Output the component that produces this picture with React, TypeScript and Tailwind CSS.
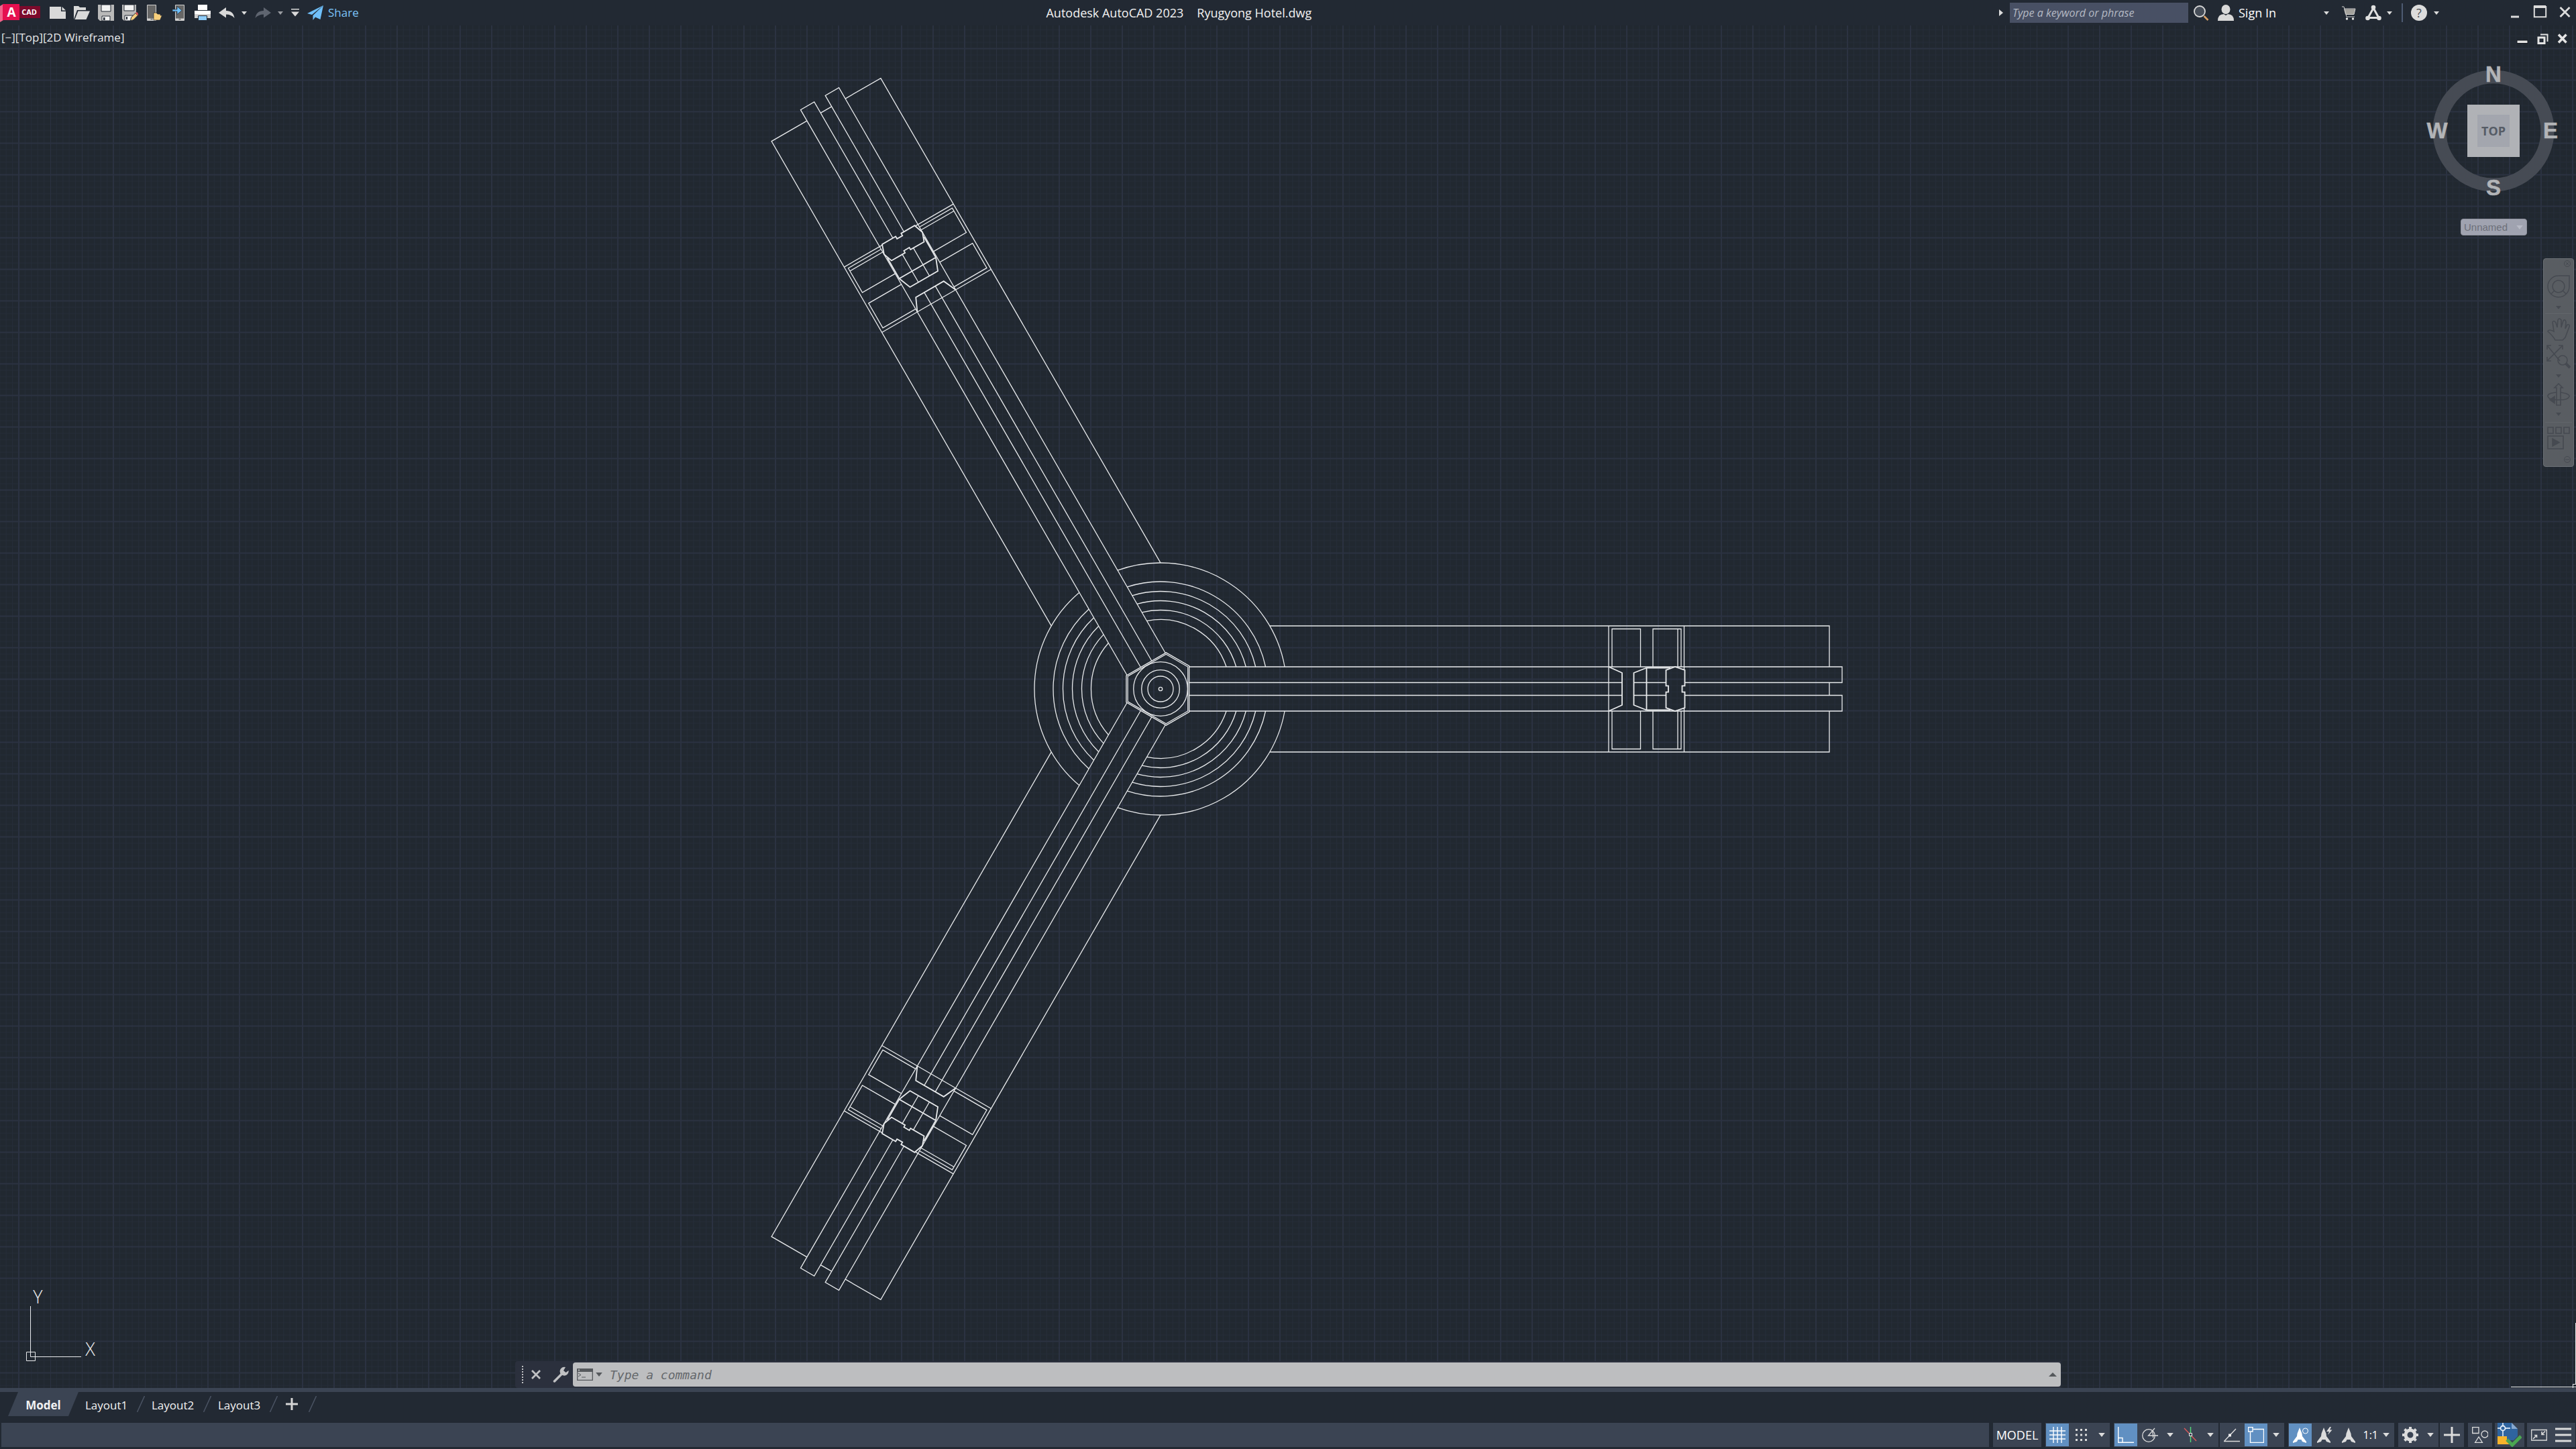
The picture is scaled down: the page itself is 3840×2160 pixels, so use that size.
import { useState, type ReactNode } from "react";

const point = (r: number, deg: number) => {
  const a = (deg * Math.PI) / 180;
  return `${(r * Math.cos(a)).toFixed(2)} ${(r * Math.sin(a)).toFixed(2)}`;
};

const hexagon = (r: number, half: number) =>
  [half, 120 - half, 120 + half, 240 - half, 240 + half, 360 - half].map((d) => point(r, d)).join(" ");

// Terrace arc between two neighbouring wings, cut at the wing edges.
const terraceArc = (r: number) => {
  const cut = (Math.asin(33 / r) * 180) / Math.PI;
  return `M${point(r, cut)}A${r} ${r} 0 0 1 ${point(r, 120 - cut)}`;
};

const TERRACES = [103.5, 117.5, 131.5, 145.5, 160, 188];
const WING_ANGLES = [0, 120, 240];

function Wing() {
  return (
    <>
      {TERRACES.map((r) => (
        <path key={r} d={terraceArc(r)} />
      ))}
      <path d="M163-94H997V-33M163 94H997V33M997-9.5V9.5" />
      <path d="M43-33H1016V-9.5H781.5M43 33H1016V9.5H781.5" />
      <path d="M43-9.5H688M43 9.5H688M705.5-9.5H753.5M705.5 9.5H753.5" />
      <path d="M668-94V94M780.5-94V-28M780.5 28V94" />
      <path d="M673-33V-89.5H715.5V-33M673 33V89.5H715.5V33" />
      <path d="M734-33V-89.5H776V-33M734 33V89.5H776V33M771-89.5V-33M771 89.5V33" />
      <path
        strokeWidth="1.8"
        d="M668-33L688-24V24L668 33M724.5-31.5L705.5-24V24L724.5 31.5M724.5-31.5V31.5M724.5-31.5H760M724.5 31.5H760"
      />
      <path
        strokeWidth="1.8"
        d="M767-33L753.5-28V-4.7H757V4.7H753.5V28L767 33L781.5 28V4.7H777.5V-4.7H781.5V-28Z"
      />
    </>
  );
}

function Drawing() {
  return (
    <svg
      className="absolute inset-0 h-full w-full"
      viewBox="0 38 3840 2031"
      preserveAspectRatio="xMidYMid slice"
      aria-label="Ryugyong Hotel plan"
    >
      <defs>
        <pattern id="grid" x="27" y="24.5" width="47" height="47" patternUnits="userSpaceOnUse">
          <path
            d="M10.4 0V47M19.8 0V47M29.2 0V47M38.6 0V47M0 10.4H47M0 19.8H47M0 29.2H47M0 38.6H47"
            stroke="#252c38"
            fill="none"
          />
          <path d="M0 1H47M1 0V47" stroke="#2b3241" strokeWidth="2" fill="none" />
        </pattern>
      </defs>
      <rect y="38" width="3840" height="2031" fill="url(#grid)" />
      <g transform="translate(1730 1027)" fill="none" stroke="#e8eaec" strokeWidth="1.3">
        {WING_ANGLES.map((a) => (
          <g key={a} transform={`rotate(${a})`}>
            <Wing />
          </g>
        ))}
        <polygon points={hexagon(54.8, 38.8)} />
        <polygon points={hexagon(52.4, 39)} />
        <circle r="40.3" />
        <circle r="28.3" />
        <circle r="19" />
        <circle r="2.7" />
      </g>
      <g fill="none" stroke="#e8eaec">
        <path d="M45.5 1947V2022.5H121M39.5 2015.5H52.5V2028.5H39.5Z" />
        <path d="M3743 2067.5H3840M3839.5 1972V2063M3835.5 2063.5H3840M3835.5 2063V2069" />
      </g>
      <g fill="#e8eaec" fontFamily="Open Sans" fontWeight="300" fontSize="27" textAnchor="middle">
        <text x="56.5" y="1943">Y</text>
        <text x="134.5" y="2021">X</text>
      </g>
    </svg>
  );
}

function Icon({ children, size = "h-6 w-6" }: { children: ReactNode; size?: string }) {
  return (
    <svg className={`${size} shrink-0`} viewBox="0 0 24 24" fill="none" aria-hidden="true">
      {children}
    </svg>
  );
}

function Caret({ tone = "text-[#dcdcdc]", size = "h-[5px] w-2" }: { tone?: string; size?: string }) {
  return (
    <svg className={`${size} ${tone} shrink-0`} viewBox="0 0 8 5" aria-hidden="true">
      <path d="M0 0H8L4 5Z" fill="currentColor" />
    </svg>
  );
}

function IconButton({ label, children }: { label: string; children: ReactNode }) {
  return (
    <button type="button" aria-label={label} className="flex shrink-0 items-center">
      {children}
    </button>
  );
}

function QuickAccess() {
  return (
    <div className="flex h-full items-center gap-3">
      <button type="button" aria-label="Application menu" className="mr-0.5 flex h-full w-15 items-center">
        <svg className="h-[38px] w-15" viewBox="0 0 60 38" aria-hidden="true">
          <path d="M0 9L5 6V30L0 33Z" fill="#f0648c" />
          <path d="M29 9H60V27H29Z" fill="#7c0a2c" />
          <path d="M4 6H29V30H4Z" fill="#e51050" />
          <text x="17" y="25" fontFamily="Open Sans" fontWeight="700" fontSize="19" fill="#fff" textAnchor="middle">
            A
          </text>
          <text x="43.5" y="22" fontFamily="Open Sans" fontWeight="700" fontSize="11" fill="#fff" textAnchor="middle">
            CAD
          </text>
        </svg>
      </button>
      <IconButton label="New">
        <Icon>
          <path d="M0 3H17V10H24V21H0Z" fill="#d9d9d9" />
          <path d="M18.5 3L24 8.5H18.5Z" fill="#d9d9d9" />
        </Icon>
      </IconButton>
      <IconButton label="Open">
        <Icon>
          <path d="M0 22V2H7L9 4H18V8H5L1 19Z" fill="#d9d9d9" />
          <path d="M6.5 9.5H24L18.5 22H1.5Z" fill="#d9d9d9" />
        </Icon>
      </IconButton>
      <IconButton label="Save">
        <Icon>
          <path d="M0 0H24V24H3L0 21Z" fill="#b9b9b9" />
          <path d="M5 0H19V10H5Z" fill="#f2f2f2" stroke="#222933" />
          <path d="M6 17H18V24H6Z" fill="#f2f2f2" stroke="#222933" />
          <path d="M8 19H10.5V23H8Z" fill="#222933" />
        </Icon>
      </IconButton>
      <IconButton label="Save as">
        <Icon>
          <path d="M0 0H21V15L12 24H3L0 21Z" fill="#b9b9b9" />
          <path d="M3 0H18V9H3Z" fill="#f2f2f2" stroke="#222933" />
          <path d="M4 16H16V24H4Z" fill="#f2f2f2" stroke="#222933" />
          <path d="M6 18H8V22H6Z" fill="#222933" />
          <path d="M12.5 24L13.5 19L20 12.5L23.5 16L17 22.5Z" fill="#f5cd7d" stroke="#222933" />
          <path d="M20 12.5L21.5 11Q24.5 12 24 15.5L23.5 16Z" fill="#e05252" />
        </Icon>
      </IconButton>
      <IconButton label="Open from web and mobile">
        <Icon>
          <path d="M1.5 .5H14.5V23.5H1.5Z" fill="#666" stroke="#d0d0d0" />
          <path d="M2 20.5H14V23H2Z" fill="#d0d0d0" />
          <path d="M6.5 21.7H9.5" stroke="#444" />
          <path d="M11 23V12H15L17 14H21V16H23.5L20.5 23Z" fill="#f7cf7c" stroke="#222933" strokeWidth=".7" />
        </Icon>
      </IconButton>
      <IconButton label="Save to web and mobile">
        <Icon>
          <path d="M7.5 .5H20.5V23.5H7.5Z" fill="#666" stroke="#d0d0d0" />
          <path d="M8 20.5H20V23H8Z" fill="#d0d0d0" />
          <path d="M12.5 21.7H15.5" stroke="#444" />
          <path d="M3 7H10V2.5L17 8.5L10 14.5V10H3Z" fill="#6fc0fb" stroke="#222933" strokeWidth=".7" />
        </Icon>
      </IconButton>
      <IconButton label="Plot">
        <Icon>
          <path d="M5 0H19V9H5Z" fill="#fff" />
          <path d="M0 9H24V20H0Z" fill="#cfcfcf" />
          <path d="M0 9H24V14H0Z" fill="#fff" />
          <path d="M5.5 16.5H18.5V23.5H5.5Z" fill="#8fccf8" stroke="#222933" />
          <path d="M4.5 8.5H19.5" stroke="#222933" />
        </Icon>
      </IconButton>
      <IconButton label="Undo">
        <span className="flex items-center gap-2.5">
          <Icon>
            <path d="M0 12L11 4V9Q22 9 23.5 20Q19 14.5 11 14.5V19.5Z" fill="#d9d9d9" />
          </Icon>
          <Caret />
        </span>
      </IconButton>
      <IconButton label="Redo">
        <span className="flex items-center gap-2.5">
          <Icon>
            <path d="M24 12L13 4V9Q2 9 .5 20Q5 14.5 13 14.5V19.5Z" fill="#5f6570" />
          </Icon>
          <Caret tone="text-[#9a9da2]" />
        </span>
      </IconButton>
      <IconButton label="Customize Quick Access Toolbar">
        <svg className="h-3 w-3" viewBox="0 0 12 12" aria-hidden="true">
          <path d="M0 0H12V1.5H0ZM0 4.5H12L6 11.5Z" fill="#d9d9d9" />
        </svg>
      </IconButton>
      <button type="button" className="flex items-center gap-[7px] text-[17px] text-[#7cc3f7]">
        <Icon>
          <path d="M24 1L0 13L7 15Z" fill="#6fc0fb" />
          <path d="M24 1L8.5 16V23L12 18.5L19.5 22Z" fill="#6fc0fb" />
        </Icon>
        Share
      </button>
    </div>
  );
}

function InfoCenter() {
  const [query, setQuery] = useState("");
  return (
    <div className="flex h-full items-center text-[#dcdcdc]">
      <IconButton label="Collapse search">
        <svg className="h-[10px] w-1.5" viewBox="0 0 6 10" aria-hidden="true">
          <path d="M0 0L6 5L0 10Z" fill="currentColor" />
        </svg>
      </IconButton>
      <input
        aria-label="Search"
        placeholder="Type a keyword or phrase"
        value={query}
        onChange={(e) => setQuery(e.target.value)}
        className="ml-2.5 h-[30px] w-[266px] bg-[#485064] px-1 text-[16px] italic text-white outline-none placeholder:text-[#b4b9c3]"
      />
      <div className="ml-2 flex items-center">
        <IconButton label="Find">
          <Icon>
            <circle cx="9" cy="10" r="8" fill="#454c57" stroke="#d9d9d9" strokeWidth="1.8" />
            <path d="M15.5 17L21.5 23" stroke="#d9a066" strokeWidth="2.5" />
          </Icon>
        </IconButton>
      </div>
      <button type="button" className="ml-3 flex items-center gap-[7px] text-white">
        <Icon>
          <ellipse cx="12" cy="7" rx="6.5" ry="7" fill="#d9d9d9" />
          <path d="M0 24Q0 14 9 14L12 16L15 14Q24 14 24 24Z" fill="#d9d9d9" />
        </Icon>
        <span className="w-30 text-left">Sign In</span>
        <Caret />
      </button>
      <div className="ml-[18px] flex items-center gap-3">
        <IconButton label="App Store">
          <Icon>
            <path d="M4 6.5H21L19 14.5H6Z" fill="#a3a19c" />
            <path d="M1 3H4L8 18H20M4.5 6H21L19 14.5H7" stroke="#d0d0d0" />
            <circle cx="8.5" cy="21" r="1.7" fill="#e8e8e8" />
            <circle cx="17.5" cy="21" r="1.7" fill="#e8e8e8" />
          </Icon>
        </IconButton>
        <button type="button" aria-label="Stay connected" className="flex items-center gap-2">
          <Icon>
            <path d="M12 5L4 19.5H20Z" stroke="#e0e0e0" strokeWidth="3" />
            <circle cx="12" cy="4" r="3.3" fill="#e0e0e0" />
            <circle cx="3.5" cy="20" r="3.3" fill="#e0e0e0" />
            <circle cx="20.5" cy="20" r="3.3" fill="#e0e0e0" />
          </Icon>
          <Caret />
        </button>
        <span className="ml-0.5 h-7 w-0.5 bg-[#4d5a72]" />
        <button type="button" aria-label="Help" className="flex items-center gap-2.5">
          <Icon>
            <circle cx="12" cy="12" r="12" fill="#dcdcdc" />
            <text x="12" y="18.5" fontFamily="Open Sans" fontSize="18" fill="#4b5058" textAnchor="middle">
              ?
            </text>
          </Icon>
          <Caret />
        </button>
      </div>
      <div className="ml-[101px] flex items-center gap-3 pr-[7px]">
        <IconButton label="Minimize">
          <Icon>
            <path d="M6 16.5H18V19.5H6Z" fill="#dcdcdc" />
          </Icon>
        </IconButton>
        <IconButton label="Maximize">
          <Icon>
            <path d="M4 3H22" stroke="#dcdcdc" strokeWidth="4" />
            <path d="M4.8 2V18.2H22.2V2" stroke="#dcdcdc" strokeWidth="2" />
          </Icon>
        </IconButton>
        <IconButton label="Close">
          <Icon>
            <path d="M7.5 4L21.5 18M21.5 4L7.5 18" stroke="#dcdcdc" strokeWidth="2.8" />
          </Icon>
        </IconButton>
      </div>
    </div>
  );
}

function ViewCube() {
  return (
    <svg className="h-[216px] w-[200px]" viewBox="0 -8 200 216" role="img" aria-label="ViewCube">
      <circle cx="100" cy="100" r="80.5" fill="none" stroke="#464b54" strokeWidth="20" />
      <g
        fontFamily="Liberation Sans"
        fontWeight="700"
        fontSize="33"
        fill="#b2b4b7"
        stroke="#b2b4b7"
        strokeWidth=".5"
        textAnchor="middle"
      >
        <text x="100" y="27">N</text>
        <text x="185" y="111">E</text>
        <text x="100" y="196">S</text>
        <text x="16" y="111">W</text>
      </g>
      <path d="M61 61H139V139H61Z" fill="#b0b2b6" />
      <path d="M76 76H124V124H76Z" fill="#a3a6ae" />
      <text x="100" y="107" fontFamily="Open Sans" fontWeight="700" fontSize="18" fill="#565c66" textAnchor="middle">
        TOP
      </text>
    </svg>
  );
}

function NavigationBar() {
  return (
    <div className="mr-[3px] mt-[34px] flex w-[46px] flex-col items-center rounded border border-[#6b7075] bg-[#595d62] text-[#464a51]">
      <button type="button" aria-label="Close navigation bar" className="mr-1 flex h-[14px] self-end pt-0.5">
        <svg className="h-[10px] w-[10px]" viewBox="0 0 10 10" fill="none" stroke="currentColor" aria-hidden="true">
          <circle cx="5" cy="5" r="4.5" />
          <path d="M3 3L7 7M7 3L3 7" />
        </svg>
      </button>
      <button type="button" aria-label="SteeringWheels" className="flex h-[67px] flex-col items-center gap-3 pt-2.5">
        <svg className="h-[34px] w-[34px]" viewBox="0 0 34 34" fill="none" stroke="currentColor" strokeWidth="1.5" aria-hidden="true">
          <path d="M17 1H33V17A16 16 0 1 1 17 1Z" />
          <circle cx="17" cy="17" r="9" />
          <path d="M6 28L11 23M28 28L23 23" />
        </svg>
        <Caret tone="text-[#464a51]" />
      </button>
      <div className="w-10 border-t border-[#62666b]" />
      <button type="button" aria-label="Pan" className="flex h-[46px] items-center">
        <svg className="h-[34px] w-[34px]" viewBox="0 0 34 34" fill="none" stroke="currentColor" strokeWidth="1.6" aria-hidden="true">
          <path d="M12 33Q9 27 1 20Q2 16 10 20L8 6Q10 3 13 7L15 14L16 3Q18-1 21 3V14L24 4Q27 1 28 6L27 16L30 10Q34 9 33 13L27 29L23 33Z" />
        </svg>
      </button>
      <button type="button" aria-label="Zoom" className="flex h-[57px] flex-col items-center gap-2">
        <svg className="h-9 w-9" viewBox="0 0 36 36" fill="none" stroke="currentColor" strokeWidth="1.6" aria-hidden="true">
          <path d="M1 1L20 24M1 24L24 1M1 7V1H7M18 1H24V7M1 18V24H7" />
          <circle cx="24" cy="23" r="7" />
          <path d="M29 28L35 34" strokeWidth="4" />
        </svg>
        <Caret tone="text-[#464a51]" />
      </button>
      <button type="button" aria-label="Orbit" className="flex h-[58px] flex-col items-center gap-2.5">
        <svg className="h-[34px] w-[34px]" viewBox="0 0 34 34" fill="none" stroke="currentColor" strokeWidth="1.6" aria-hidden="true">
          <path d="M14 33V7H11L17 1L23 7H20V33Z" />
          <path d="M14 14Q0 15 1 20Q3 26 20 25M20 14Q34 16 33 20Q31 25 20 25" />
          <path d="M11 20V30L4 25Z" fill="currentColor" />
        </svg>
        <Caret tone="text-[#464a51]" />
      </button>
      <div className="w-10 border-t border-[#62666b]" />
      <button type="button" aria-label="ShowMotion" className="flex h-[50px] items-start pt-1.5">
        <svg className="h-[34px] w-[34px]" viewBox="0 0 34 34" fill="none" stroke="currentColor" strokeWidth="1.6" aria-hidden="true">
          <path d="M1 1H9V10H1ZM13 1H21V10H13ZM25 1H33V10H25ZM1 14H24V33H1Z" />
          <path d="M8 18V29L18 23.5Z" fill="currentColor" />
        </svg>
      </button>
      <button type="button" aria-label="Navigation bar options" className="mr-1 flex h-[15px] self-end">
        <svg className="h-[10px] w-[10px]" viewBox="0 0 10 10" fill="none" stroke="currentColor" aria-hidden="true">
          <circle cx="5" cy="5" r="4.5" />
          <path d="M2 5H8" />
        </svg>
      </button>
    </div>
  );
}

function CommandLine() {
  const [command, setCommand] = useState("");
  return (
    <div className="mx-auto mt-auto flex h-10 w-[60%] items-center rounded-l bg-[#2b303d]">
      <div className="flex w-[86px] shrink-0 items-center pl-2.5 text-[#c0c1c3]">
        <span className="h-[26px] border-l-2 border-dotted border-[#c0c1c3]" />
        <button type="button" aria-label="Close command line" className="ml-3">
          <svg className="h-[14px] w-[14px]" viewBox="0 0 14 14" stroke="currentColor" strokeWidth="2.8" aria-hidden="true">
            <path d="M1 1L13 13M13 1L1 13" />
          </svg>
        </button>
        <button type="button" aria-label="Customize" className="ml-[18px]">
          <Icon>
            <path d="M2.5 22L14 10.5" stroke="currentColor" strokeWidth="3.5" strokeLinecap="round" />
            <path d="M19 1A6.5 6.5 0 1 0 23.5 6L19.5 9L16 6Z" fill="currentColor" />
          </Icon>
        </button>
      </div>
      <div className="flex h-9 flex-1 items-center rounded-sm bg-[#bdbec0] px-1.5">
        <button type="button" aria-label="Recent commands" className="flex items-center gap-[3px]">
          <Icon>
            <path d="M.7 3.7H23.3V20.3H.7Z" stroke="#55585c" strokeWidth="1.3" />
            <path d="M0 3H24V8H0Z" fill="#55585c" />
            <path d="M2 4.5H4V6.5H2Z" fill="#bdbec0" />
            <path d="M2 10L6 12.5L2 15M7 16H13" stroke="#55585c" />
          </Icon>
          <Caret tone="text-[#55585c]" size="h-1.5 w-3" />
        </button>
        <input
          aria-label="Command"
          placeholder="Type a command"
          value={command}
          onChange={(e) => setCommand(e.target.value)}
          className="ml-2.5 h-8 flex-1 bg-transparent font-[DejaVu_Sans_Mono,monospace] text-[18px] italic text-[#333] outline-none placeholder:text-[#65686c]"
        />
        <button type="button" aria-label="Show history">
          <svg className="h-1.5 w-3" viewBox="0 0 12 6" aria-hidden="true">
            <path d="M0 6L6 0L12 6Z" fill="#55585c" />
          </svg>
        </button>
      </div>
    </div>
  );
}

function Viewport() {
  return (
    <main className="relative min-h-0 flex-1 overflow-hidden bg-[#212830]">
      <Drawing />
      <div className="relative flex h-full flex-col">
        <div className="flex h-[49px] items-start justify-between">
          <div className="flex pl-0.5 pt-1.5 text-[17px] leading-6 text-[#e6e7e8]">
            <button type="button">[−]</button>
            <button type="button">[Top]</button>
            <button type="button">[2D Wireframe]</button>
          </div>
          <div className="flex gap-1.5 pr-2 pt-2">
            <IconButton label="Minimize drawing">
              <Icon>
                <path d="M4 14H20V18.5H4Z" fill="#e4e4e4" stroke="#15191f" />
              </Icon>
            </IconButton>
            <IconButton label="Restore drawing">
              <Icon>
                <path d="M9 5.5H19.5V16" stroke="#e4e4e4" strokeWidth="2" />
                <path d="M6 10H15V18.5H6Z" stroke="#e4e4e4" strokeWidth="3" />
              </Icon>
            </IconButton>
            <IconButton label="Close drawing">
              <Icon>
                <path d="M6 5.5L17.5 17.5M17.5 5.5L6 17.5" stroke="#e4e4e4" strokeWidth="3.5" />
              </Icon>
            </IconButton>
          </div>
        </div>
        <div className="flex flex-col items-end">
          <div className="pr-[23px]">
            <ViewCube />
          </div>
          <button
            type="button"
            className="mr-[73px] mt-[23px] flex h-[25px] w-[99px] items-center justify-between rounded border border-[#8f929e] bg-[#a0a3b0] px-1 font-[Liberation_Sans,sans-serif] text-[15px] leading-5 text-[#6c6f78]"
          >
            Unnamed
            <Caret tone="text-[#b8bbc6]" size="h-1.5 w-3" />
          </button>
          <NavigationBar />
        </div>
        <CommandLine />
      </div>
    </main>
  );
}

function Slash() {
  return (
    <svg className="h-6 w-3 shrink-0" viewBox="0 0 12 24" stroke="#4a5363" strokeWidth="1.5" aria-hidden="true">
      <path d="M.5 24L11.5 0" />
    </svg>
  );
}

function LayoutTabs() {
  const layouts = ["Layout1", "Layout2", "Layout3"];
  return (
    <nav className="flex h-[51px] shrink-0 items-start border-t-6 border-[#3b4453] pl-3 text-[17px] text-[#f2f2f2]">
      <button
        type="button"
        className="h-9 w-[105px] bg-[#3b4453] pt-1 font-bold [clip-path:polygon(15px_0,100%_0,calc(100%-15px)_100%,0_100%)]"
      >
        Model
      </button>
      {layouts.map((name) => (
        <div key={name} className="flex h-9 w-[99px] items-center justify-between pl-2.5">
          <button type="button" className="pt-1">
            {name}
          </button>
          <Slash />
        </div>
      ))}
      <div className="flex h-9 w-[58px] items-center justify-between pl-3">
        <button type="button" aria-label="New layout">
          <svg className="h-[18px] w-[18px]" viewBox="0 0 18 18" stroke="#d5d5d5" strokeWidth="3" aria-hidden="true">
            <path d="M9 0V18M0 9H18" />
          </svg>
        </button>
        <Slash />
      </div>
    </nav>
  );
}

function Group({ children }: { children: ReactNode }) {
  return <div className="flex h-9 bg-[#3b4453]">{children}</div>;
}

function Cell({ label, active, children }: { label: string; active?: boolean; children: ReactNode }) {
  return (
    <button
      type="button"
      aria-label={label}
      aria-pressed={!!active}
      className={`flex h-9 w-9 items-center justify-center border border-[#3b4453] ${active ? "bg-[#6190c2]" : "bg-[#3b4453]"}`}
    >
      <Icon>{children}</Icon>
    </button>
  );
}

function CaretCell({ label }: { label: string }) {
  return (
    <button type="button" aria-label={label} className="flex h-9 w-6 items-center justify-center">
      <Caret size="h-1.5 w-3" />
    </button>
  );
}

const COMPASS_LEGS = "M0-12L3.5-3L4 1L10 9V11L4 9L2.5 6H-2.5L-4 9L-10 11V9L-4 1L-3.5-3Z";

function StatusBar() {
  return (
    <footer className="flex h-10 shrink-0 items-start gap-1.5 pl-0.5 pr-px pt-px text-white">
      <div className="h-9 flex-1 bg-[#3b4453]" />
      <button type="button" className="h-9 w-[72px] bg-[#3b4453] text-[18px]">
        MODEL
      </button>
      <Group>
        <Cell label="Grid" active>
          <path d="M6 0V24M12 0V24M18 0V24M0 6H24M0 12H24M0 18H24" stroke="#fff" strokeWidth="1.4" />
        </Cell>
        <Cell label="Snap">
          <path
            d="M3 3H6V6H3ZM10 3H13V6H10ZM17 3H20V6H17ZM3 10.5H6V13.5H3ZM10 10.5H13V13.5H10ZM17 10.5H20V13.5H17ZM3 18H6V21H3ZM10 18H13V21H10ZM17 18H20V21H17Z"
            fill="#dcdcdc"
          />
        </Cell>
        <CaretCell label="Snap options" />
      </Group>
      <div className="flex gap-0.5">
        <Group>
          <Cell label="Ortho" active>
            <path d="M.7 0V23.3H24M.7 16.5H7V23" stroke="#fff" strokeWidth="1.4" />
          </Cell>
          <Cell label="Polar tracking">
            <circle cx="10" cy="13" r="9.3" stroke="#dcdcdc" strokeWidth="1.3" />
            <path d="M19 2L9.5 13H24M15 7Q17 10 16.5 16" stroke="#dcdcdc" strokeWidth="1.3" />
          </Cell>
          <CaretCell label="Polar options" />
          <Cell label="Isometric drafting">
            <path d="M3 2L21 21" stroke="#e05a5a" strokeWidth="1.3" />
            <path d="M12.5 0V23" stroke="#55d67a" strokeWidth="1.5" />
            <path d="M10.5 9.5H14.5V13.5H10.5Z" fill="#3b4453" stroke="#f0f0f0" />
          </Cell>
          <CaretCell label="Isoplane options" />
        </Group>
        <Group>
          <Cell label="Object snap tracking">
            <path d="M18 3L.5 21.5H24" stroke="#dcdcdc" strokeWidth="1.4" />
            <path d="M7 10.5H11V14.5H7Z" fill="#f0f0f0" />
          </Cell>
          <Cell label="Object snap" active>
            <path d="M8 3.5H23.5V23.5H3.5V8" stroke="#fff" strokeWidth="1.4" />
            <path d="M.5.5H7V7H.5Z" stroke="#fff" strokeWidth="1.4" />
          </Cell>
          <CaretCell label="Object snap options" />
        </Group>
      </div>
      <Group>
        <Cell label="Annotation visibility" active>
          <path d={COMPASS_LEGS} transform="translate(11 13)" fill="#fff" />
          <circle cx="19.5" cy="6" r="4" stroke="#fff" />
        </Cell>
        <Cell label="Auto scale">
          <path d={COMPASS_LEGS} transform="translate(11 13)" fill="#dcdcdc" />
          <path d="M20 0L15 7H19L17 12L23.5 4.5H20L22 0Z" fill="#dcdcdc" />
        </Cell>
        <Cell label="Annotation scale">
          <path d={COMPASS_LEGS} transform="translate(12 13)" fill="#dcdcdc" />
        </Cell>
        <button type="button" className="flex h-9 w-[50px] items-center justify-end gap-1.5 pr-1.5 text-[16px]">
          1:1
          <Caret size="h-1.5 w-3" />
        </button>
      </Group>
      <div className="flex gap-0.5">
        <Group>
          <Cell label="Workspace switching">
            <circle cx="12" cy="12" r="7" stroke="#dcdcdc" strokeWidth="5" />
            <path
              d="M12 0V4M12 20V24M0 12H4M20 12H24M3.5 3.5L6.5 6.5M17.5 17.5L20.5 20.5M20.5 3.5L17.5 6.5M3.5 20.5L6.5 17.5"
              stroke="#dcdcdc"
              strokeWidth="4"
            />
          </Cell>
          <CaretCell label="Workspace options" />
        </Group>
        <Group>
          <Cell label="Annotation monitor">
            <path d="M12 0V24M0 12H24" stroke="#dcdcdc" strokeWidth="3" />
          </Cell>
        </Group>
      </div>
      <div className="flex gap-1">
        <Group>
          <Cell label="Isolate objects">
            <path d="M.7.7H10V9.5H.7ZM4.5 23.5L10 15L15.5 23.5Z" stroke="#dcdcdc" strokeWidth="1.3" />
            <circle cx="19" cy="11" r="5" stroke="#dcdcdc" strokeWidth="1.3" />
          </Cell>
        </Group>
        <button type="button" aria-label="Trusted DWG" className="flex h-9 w-11 items-center justify-center bg-[#3b4453]">
          <svg className="h-9 w-9" viewBox="0 0 36 36" fill="none" aria-hidden="true">
            <path d="M0 0H21L30 9V20L24 26H0Z" fill="#2f649f" />
            <path d="M21 0L30 9H21Z" fill="#88a9d0" />
            <path d="M8 0V20M0 8H19" stroke="#c9dcf0" strokeWidth="1.8" />
            <circle cx="8" cy="8" r="3.5" fill="#2f649f" stroke="#e6f0fa" strokeWidth="1.8" />
            <path d="M0 20H14V26H13L18 32H0Z" fill="#f6b42c" />
            <path d="M14 25L22 33L35 20" stroke="#4ba651" strokeWidth="5" />
          </svg>
        </button>
        <Group>
          <Cell label="Clean screen">
            <path d="M.7 4.5H23.3V20H.7Z" stroke="#dcdcdc" strokeWidth="1.3" />
            <path d="M3 18L8 13M5 12.5H8.5V16M21 6.5L16.5 11M16 7V11.5H20" stroke="#dcdcdc" strokeWidth="1.6" />
          </Cell>
          <Cell label="Customization">
            <path d="M0 3H24M0 12H24M0 21H24" stroke="#dcdcdc" strokeWidth="3" />
          </Cell>
        </Group>
      </div>
    </footer>
  );
}

export default function App() {
  return (
    <div className="flex h-screen flex-col overflow-hidden bg-[#222933] font-[Open_Sans,Noto_Sans,sans-serif]">
      <header className="flex h-[38px] shrink-0 items-center justify-between text-[18px] text-[#f2f2f2]">
        <QuickAccess />
        <h1 className="flex gap-5">
          <span>Autodesk AutoCAD 2023</span>
          <span>Ryugyong Hotel.dwg</span>
        </h1>
        <InfoCenter />
      </header>
      <Viewport />
      <LayoutTabs />
      <StatusBar />
    </div>
  );
}
